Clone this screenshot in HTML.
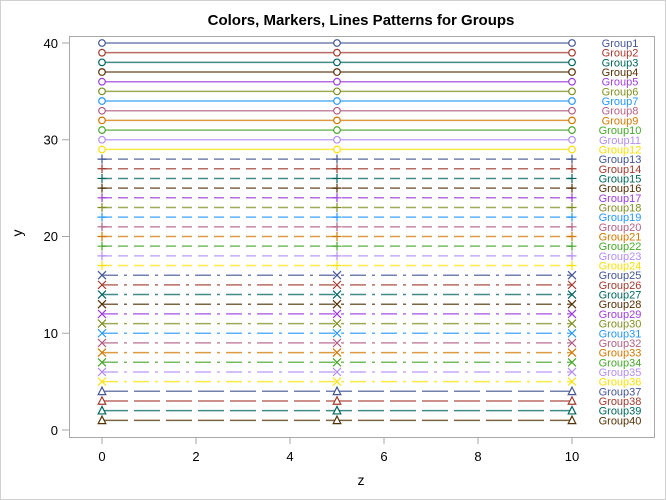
<!DOCTYPE html>
<html><head><meta charset="utf-8"><style>
html,body{margin:0;padding:0;background:#fff}
svg{display:block;font-family:"Liberation Sans",sans-serif}
.l text{font-size:11px;text-anchor:middle}
line{stroke-opacity:.75}
.a{stroke-dasharray:10 6}
.b{stroke-dasharray:16 6 3 6}
.d{stroke-dasharray:26 6}
</style></head><body>
<svg width="666" height="500" viewBox="0 0 666 500">
<defs>
<g id="c"><circle r="3.3" fill="#fff" stroke-dasharray="none" stroke-width="1.2"/></g>
<g id="p"><path d="M-4.5 0H4.5M0 -4.5V4.5" stroke-dasharray="none" stroke-width="1.2"/></g>
<g id="x"><path d="M-4 -4L4 4M-4 4L4 -4" stroke-dasharray="none" stroke-width="1.2"/></g>
<g id="t"><path d="M0 -4.2L3.8 3.3H-3.8Z" fill="#fff" stroke-dasharray="none" stroke-width="1.2"/></g>
</defs>
<rect x="0.5" y="0.5" width="665" height="499" fill="#fff" stroke="#d0d0d0"/>
<text x="361" y="25" font-size="15" font-weight="bold" text-anchor="middle" fill="#000">Colors, Markers, Lines Patterns for Groups</text>
<rect x="69.5" y="36.5" width="585" height="401" fill="#fff" stroke="#a8a8a8"/>
<g stroke="#888" stroke-width="1">
<line x1="62" x2="69" y1="43" y2="43"/><line x1="62" x2="69" y1="139.75" y2="139.75"/><line x1="62" x2="69" y1="236.5" y2="236.5"/><line x1="62" x2="69" y1="333.25" y2="333.25"/><line x1="62" x2="69" y1="430" y2="430"/>
<line x1="102" x2="102" y1="438" y2="444"/><line x1="196" x2="196" y1="438" y2="444"/><line x1="290" x2="290" y1="438" y2="444"/><line x1="384" x2="384" y1="438" y2="444"/><line x1="478" x2="478" y1="438" y2="444"/><line x1="572" x2="572" y1="438" y2="444"/>
</g>
<g font-size="13" fill="#000" text-anchor="end">
<text x="58" y="48">40</text><text x="58" y="144.5">30</text><text x="58" y="241">20</text><text x="58" y="338">10</text><text x="58" y="435">0</text>
</g>
<g font-size="13" fill="#000" text-anchor="middle">
<text x="102" y="461">0</text><text x="196" y="461">2</text><text x="290" y="461">4</text><text x="384" y="461">6</text><text x="478" y="461">8</text><text x="572" y="461">10</text>
<text x="361" y="485" font-size="14">z</text>
<text x="22" y="241" font-size="14" transform="rotate(-90 18 237)">y</text>
</g>
<g fill="none" stroke-width="1.5">
<g stroke="#445694" transform="translate(0,43)"><line x1="102" x2="572"/><use href="#c" x="102"/><use href="#c" x="337"/><use href="#c" x="572"/></g>
<g stroke="#A23A2E" transform="translate(0,52.68)"><line x1="102" x2="572"/><use href="#c" x="102"/><use href="#c" x="337"/><use href="#c" x="572"/></g>
<g stroke="#01665E" transform="translate(0,62.35)"><line x1="102" x2="572"/><use href="#c" x="102"/><use href="#c" x="337"/><use href="#c" x="572"/></g>
<g stroke="#543005" transform="translate(0,72.03)"><line x1="102" x2="572"/><use href="#c" x="102"/><use href="#c" x="337"/><use href="#c" x="572"/></g>
<g stroke="#9D3CDB" transform="translate(0,81.7)"><line x1="102" x2="572"/><use href="#c" x="102"/><use href="#c" x="337"/><use href="#c" x="572"/></g>
<g stroke="#7F8E1F" transform="translate(0,91.38)"><line x1="102" x2="572"/><use href="#c" x="102"/><use href="#c" x="337"/><use href="#c" x="572"/></g>
<g stroke="#2597FA" transform="translate(0,101.05)"><line x1="102" x2="572"/><use href="#c" x="102"/><use href="#c" x="337"/><use href="#c" x="572"/></g>
<g stroke="#B26084" transform="translate(0,110.73)"><line x1="102" x2="572"/><use href="#c" x="102"/><use href="#c" x="337"/><use href="#c" x="572"/></g>
<g stroke="#D17800" transform="translate(0,120.4)"><line x1="102" x2="572"/><use href="#c" x="102"/><use href="#c" x="337"/><use href="#c" x="572"/></g>
<g stroke="#47A82A" transform="translate(0,130.08)"><line x1="102" x2="572"/><use href="#c" x="102"/><use href="#c" x="337"/><use href="#c" x="572"/></g>
<g stroke="#B38EF3" transform="translate(0,139.75)"><line x1="102" x2="572"/><use href="#c" x="102"/><use href="#c" x="337"/><use href="#c" x="572"/></g>
<g stroke="#F9E10A" transform="translate(0,149.43)"><line x1="102" x2="572"/><use href="#c" x="102"/><use href="#c" x="337"/><use href="#c" x="572"/></g>

<g stroke="#445694" transform="translate(0,159.1)"><line class="a" x1="102" x2="572"/><use href="#p" x="102"/><use href="#p" x="337"/><use href="#p" x="572"/></g>
<g stroke="#A23A2E" transform="translate(0,168.78)"><line class="a" x1="102" x2="572"/><use href="#p" x="102"/><use href="#p" x="337"/><use href="#p" x="572"/></g>
<g stroke="#01665E" transform="translate(0,178.45)"><line class="a" x1="102" x2="572"/><use href="#p" x="102"/><use href="#p" x="337"/><use href="#p" x="572"/></g>
<g stroke="#543005" transform="translate(0,188.13)"><line class="a" x1="102" x2="572"/><use href="#p" x="102"/><use href="#p" x="337"/><use href="#p" x="572"/></g>
<g stroke="#9D3CDB" transform="translate(0,197.8)"><line class="a" x1="102" x2="572"/><use href="#p" x="102"/><use href="#p" x="337"/><use href="#p" x="572"/></g>
<g stroke="#7F8E1F" transform="translate(0,207.48)"><line class="a" x1="102" x2="572"/><use href="#p" x="102"/><use href="#p" x="337"/><use href="#p" x="572"/></g>
<g stroke="#2597FA" transform="translate(0,217.15)"><line class="a" x1="102" x2="572"/><use href="#p" x="102"/><use href="#p" x="337"/><use href="#p" x="572"/></g>
<g stroke="#B26084" transform="translate(0,226.83)"><line class="a" x1="102" x2="572"/><use href="#p" x="102"/><use href="#p" x="337"/><use href="#p" x="572"/></g>
<g stroke="#D17800" transform="translate(0,236.5)"><line class="a" x1="102" x2="572"/><use href="#p" x="102"/><use href="#p" x="337"/><use href="#p" x="572"/></g>
<g stroke="#47A82A" transform="translate(0,246.18)"><line class="a" x1="102" x2="572"/><use href="#p" x="102"/><use href="#p" x="337"/><use href="#p" x="572"/></g>
<g stroke="#B38EF3" transform="translate(0,255.85)"><line class="a" x1="102" x2="572"/><use href="#p" x="102"/><use href="#p" x="337"/><use href="#p" x="572"/></g>
<g stroke="#F9E10A" transform="translate(0,265.53)"><line class="a" x1="102" x2="572"/><use href="#p" x="102"/><use href="#p" x="337"/><use href="#p" x="572"/></g>

<g stroke="#445694" transform="translate(0,275.2)"><line class="b" x1="102" x2="572"/><use href="#x" x="102"/><use href="#x" x="337"/><use href="#x" x="572"/></g>
<g stroke="#A23A2E" transform="translate(0,284.88)"><line class="b" x1="102" x2="572"/><use href="#x" x="102"/><use href="#x" x="337"/><use href="#x" x="572"/></g>
<g stroke="#01665E" transform="translate(0,294.55)"><line class="b" x1="102" x2="572"/><use href="#x" x="102"/><use href="#x" x="337"/><use href="#x" x="572"/></g>
<g stroke="#543005" transform="translate(0,304.23)"><line class="b" x1="102" x2="572"/><use href="#x" x="102"/><use href="#x" x="337"/><use href="#x" x="572"/></g>
<g stroke="#9D3CDB" transform="translate(0,313.9)"><line class="b" x1="102" x2="572"/><use href="#x" x="102"/><use href="#x" x="337"/><use href="#x" x="572"/></g>
<g stroke="#7F8E1F" transform="translate(0,323.58)"><line class="b" x1="102" x2="572"/><use href="#x" x="102"/><use href="#x" x="337"/><use href="#x" x="572"/></g>
<g stroke="#2597FA" transform="translate(0,333.25)"><line class="b" x1="102" x2="572"/><use href="#x" x="102"/><use href="#x" x="337"/><use href="#x" x="572"/></g>
<g stroke="#B26084" transform="translate(0,342.93)"><line class="b" x1="102" x2="572"/><use href="#x" x="102"/><use href="#x" x="337"/><use href="#x" x="572"/></g>
<g stroke="#D17800" transform="translate(0,352.6)"><line class="b" x1="102" x2="572"/><use href="#x" x="102"/><use href="#x" x="337"/><use href="#x" x="572"/></g>
<g stroke="#47A82A" transform="translate(0,362.28)"><line class="b" x1="102" x2="572"/><use href="#x" x="102"/><use href="#x" x="337"/><use href="#x" x="572"/></g>
<g stroke="#B38EF3" transform="translate(0,371.95)"><line class="b" x1="102" x2="572"/><use href="#x" x="102"/><use href="#x" x="337"/><use href="#x" x="572"/></g>
<g stroke="#F9E10A" transform="translate(0,381.63)"><line class="b" x1="102" x2="572"/><use href="#x" x="102"/><use href="#x" x="337"/><use href="#x" x="572"/></g>

<g stroke="#445694" transform="translate(0,391.3)"><line class="d" x1="102" x2="572"/><use href="#t" x="102"/><use href="#t" x="337"/><use href="#t" x="572"/></g>
<g stroke="#A23A2E" transform="translate(0,400.98)"><line class="d" x1="102" x2="572"/><use href="#t" x="102"/><use href="#t" x="337"/><use href="#t" x="572"/></g>
<g stroke="#01665E" transform="translate(0,410.65)"><line class="d" x1="102" x2="572"/><use href="#t" x="102"/><use href="#t" x="337"/><use href="#t" x="572"/></g>
<g stroke="#543005" transform="translate(0,420.33)"><line class="d" x1="102" x2="572"/><use href="#t" x="102"/><use href="#t" x="337"/><use href="#t" x="572"/></g>
</g>
<g class="l">
<text x="620" y="47" fill="#445694">Group1</text>
<text x="620" y="56.68" fill="#A23A2E">Group2</text>
<text x="620" y="66.35" fill="#01665E">Group3</text>
<text x="620" y="76.03" fill="#543005">Group4</text>
<text x="620" y="85.7" fill="#9D3CDB">Group5</text>
<text x="620" y="95.38" fill="#7F8E1F">Group6</text>
<text x="620" y="105.05" fill="#2597FA">Group7</text>
<text x="620" y="114.73" fill="#B26084">Group8</text>
<text x="620" y="124.4" fill="#D17800">Group9</text>
<text x="620" y="134.08" fill="#47A82A">Group10</text>
<text x="620" y="143.75" fill="#B38EF3">Group11</text>
<text x="620" y="153.43" fill="#F9E10A">Group12</text>
<text x="620" y="163.1" fill="#445694">Group13</text>
<text x="620" y="172.78" fill="#A23A2E">Group14</text>
<text x="620" y="182.45" fill="#01665E">Group15</text>
<text x="620" y="192.13" fill="#543005">Group16</text>
<text x="620" y="201.8" fill="#9D3CDB">Group17</text>
<text x="620" y="211.48" fill="#7F8E1F">Group18</text>
<text x="620" y="221.15" fill="#2597FA">Group19</text>
<text x="620" y="230.83" fill="#B26084">Group20</text>
<text x="620" y="240.5" fill="#D17800">Group21</text>
<text x="620" y="250.18" fill="#47A82A">Group22</text>
<text x="620" y="259.85" fill="#B38EF3">Group23</text>
<text x="620" y="269.53" fill="#F9E10A">Group24</text>
<text x="620" y="279.2" fill="#445694">Group25</text>
<text x="620" y="288.88" fill="#A23A2E">Group26</text>
<text x="620" y="298.55" fill="#01665E">Group27</text>
<text x="620" y="308.23" fill="#543005">Group28</text>
<text x="620" y="317.9" fill="#9D3CDB">Group29</text>
<text x="620" y="327.58" fill="#7F8E1F">Group30</text>
<text x="620" y="337.25" fill="#2597FA">Group31</text>
<text x="620" y="346.93" fill="#B26084">Group32</text>
<text x="620" y="356.6" fill="#D17800">Group33</text>
<text x="620" y="366.28" fill="#47A82A">Group34</text>
<text x="620" y="375.95" fill="#B38EF3">Group35</text>
<text x="620" y="385.63" fill="#F9E10A">Group36</text>
<text x="620" y="395.3" fill="#445694">Group37</text>
<text x="620" y="404.98" fill="#A23A2E">Group38</text>
<text x="620" y="414.65" fill="#01665E">Group39</text>
<text x="620" y="424.33" fill="#543005">Group40</text>
</g>
</svg>
</body></html>
